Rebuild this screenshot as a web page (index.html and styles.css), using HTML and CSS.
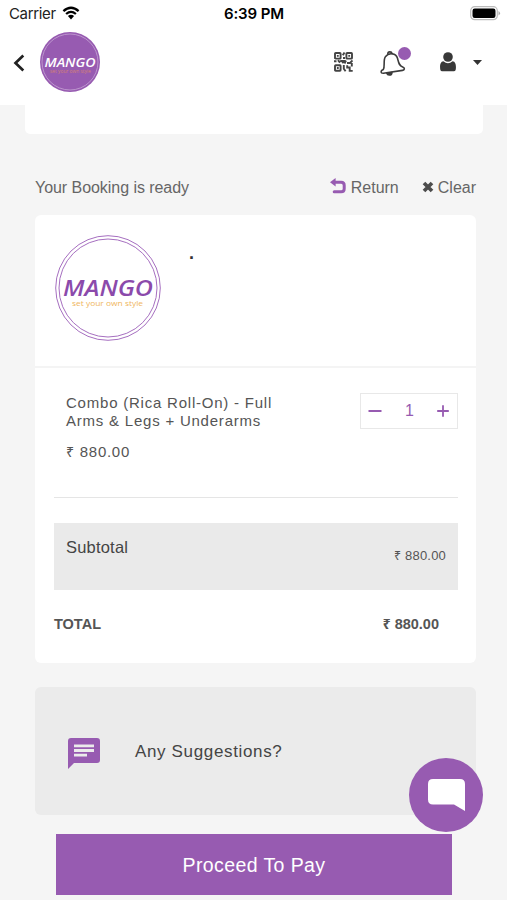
FILE: index.html
```html
<!DOCTYPE html>
<html lang="en">
<head>
<meta charset="utf-8">
<title>Mango – Booking</title>
<link rel="stylesheet" href="styles.css">
</head>
<body>
<div class="screen">
  <header class="header">
    <div class="status">
      <div class="carrier"><span>Carrier</span>
        <svg class="wifi" viewBox="0 0 18 14"><path d="M1.4 5.1Q9-1.7 16.6 5.1M4.1 8Q9 3.7 13.9 8" fill="none" stroke="#000" stroke-width="2.3"/><path d="M5.9 10.1Q9 7.6 12.1 10.1L9 13.4z"/></svg>
      </div>
      <div class="clock">6:39 PM</div>
      <svg class="battery" viewBox="0 0 31 15"><rect x=".7" y=".7" width="26.6" height="13" rx="4" fill="#fff" stroke="#bbb" stroke-width="1.2"/><rect x="2.5" y="2.5" width="23" height="9.5" rx="2.2"/><path d="M28.5 5q3 2.2 0 4.5z" fill="#aaa"/></svg>
    </div>
    <nav class="nav">
      <svg class="back" viewBox="0 0 12 18"><path d="M10.3 1.5 2.5 9l7.8 7.5" fill="none" stroke="#222" stroke-width="2.7"/></svg>
      <svg class="brand" viewBox="0 0 60 60"><circle cx="30" cy="30" r="30" fill="#975bb1"/><circle cx="30" cy="30" r="28" fill="none" stroke="#c5a3d4" stroke-width=".8"/><text class="brand-name" x="4.5" y="34.5" font-size="11.8" textLength="51" lengthAdjust="spacingAndGlyphs" fill="#fff">MANGO</text><text class="brand-tag" x="10" y="40.6" font-size="4.6" textLength="41" lengthAdjust="spacingAndGlyphs" fill="#d58273">set your own style</text></svg>
      <svg class="qr" viewBox="0 0 19 20"><g fill="none" stroke="#444" stroke-width="1.9"><rect x="1" y="1" width="5.6" height="5.6" rx=".7"/><rect x="12.4" y="1" width="5.6" height="5.6" rx=".7"/><rect x="1" y="13.2" width="5.6" height="5.6" rx=".7"/><path d="M10.5 .5 8.8 3.2M9 6h2M0 9.3h2.5M4 8.2l2 2.4M6.2 9h3.6l-1.5 2.3M12 8.5l-1.5 3M13 11h3l2.5-2.5M17.8 11v3.5M9.8 13v3.8l1.8 2.5M13.2 13.2v2.3h2.5v3.4h3"/></g><path d="M2.9 2.9h1.8v1.8H2.9zM14.3 2.9h1.8v1.8h-1.8zM2.9 15.1h1.8v1.8H2.9z" fill="#444"/></svg>
      <div class="bell-box">
        <svg class="bell" viewBox="0 0 26 26"><g fill="none" stroke="#3b3b3b" stroke-width="1.6" stroke-linejoin="round" stroke-linecap="round"><path d="M3.3 18.6C5.2 15.8 3 9.3 5.3 5.9c3.6-5 10.6-3.8 12.2 1.4 1.2 4.5 1.4 7.2 5.2 8.6 2.6 1 1.9 3.2-.2 3.5L3.4 22.2C.4 22.3.2 19.9 3.3 18.6z"/><path d="M7.8 3C7.8.3 11.4.1 12.2 2.7"/><path d="M6.8 22.2c.9 2.8 5 2.3 5.1-.6z" fill="#3b3b3b"/></g></svg>
        <i class="badge"></i>
      </div>
      <svg class="user" viewBox="0 0 16 20"><path d="M3.4 9.2C-.2 9.5-.3 15 .4 18q.3 1.3 1.8 1.3h11.6q1.5 0 1.8-1.3c.7-3 .6-8.5-3-8.8q-4.6 4-9.2 0z" fill="#383838"/><circle cx="8" cy="5" r="4.8" fill="#383838"/></svg>
      <svg class="caret" viewBox="0 0 9 5"><path d="M0 0h9L4.5 5z" fill="#333"/></svg>
    </nav>
  </header>
  <div class="panel-end"></div>
  <main class="main">
    <div class="title-row">
      <span class="title">Your Booking is ready</span>
      <a class="action return"><svg viewBox="0 0 16 16"><path d="M4 4.3h7.2q3 0 3 3v3.4q0 3-3 3H4.2" fill="none" stroke="#975bb1" stroke-width="3" stroke-linecap="round"/><path d="M0 4.3 5.6 0v8.6z" fill="#975bb1"/></svg><span>Return</span></a>
      <a class="action clear"><svg viewBox="0 0 12 12"><path d="m2 2 8 8m0-8-8 8" stroke="#4c4c4c" stroke-width="3.7"/></svg><span>Clear</span></a>
    </div>
    <section class="card">
      <div class="vendor">
        <svg class="logo" viewBox="0 0 106 106"><g fill="none" stroke="#a66fc0" stroke-width="1"><circle cx="53" cy="53" r="52.3"/><circle cx="53" cy="53" r="49"/></g><text class="brand-name" x="8" y="60.5" font-size="21" textLength="90" lengthAdjust="spacingAndGlyphs" fill="#8b4aab">MANGO</text><text class="brand-tag" x="17" y="70.8" font-size="8" textLength="71" lengthAdjust="spacingAndGlyphs" fill="#efb660">set your own style</text></svg>
        <b class="dot">.</b>
      </div>
      <div class="details">
        <div class="item">
          <div class="item-text"><div class="name">Combo (Rica Roll-On) - Full<br>Arms &amp; Legs + Underarms</div><div class="price"><span class="rs">₹</span> 880.00</div></div>
          <div class="qty"><svg viewBox="0 0 14 14"><path d="M.5 7h13" stroke="#975bb1" stroke-width="2"/></svg><span>1</span><svg class="plus" viewBox="0 0 14 14"><path d="M1.2 7h11.6M7 1.2v11.6" stroke="#975bb1" stroke-width="1.8"/></svg></div>
        </div>
        <div class="subtotal"><span>Subtotal</span><span class="amount"><span class="rs">₹</span> 880.00</span></div>
        <div class="total"><span>TOTAL</span><span class="sum"><span class="rs">₹</span> 880.00</span></div>
      </div>
    </section>
    <section class="suggest"><svg viewBox="0 0 32 31"><path d="M3 0h26q3 0 3 3v19q0 3-3 3H6l-6 6V3q0-3 3-3z" fill="#975bb1"/><path d="M6 7.8h20M6 12.5h20M6 17.2h13" stroke="#ebebeb" stroke-width="2.8"/></svg><span>Any Suggestions?</span></section>
    <div class="pay">Proceed To Pay</div>
  </main>
  <div class="chat"><svg viewBox="0 0 37 32"><path d="M5 0h27q5 0 5 5v27l-11-6.5H5q-5 0-5-5V5q0-5 5-5z" fill="#fff"/></svg></div>
</div>
</body>
</html>
```

FILE: styles.css
```css
* { box-sizing: border-box; }
body { margin: 0; font-family: "Liberation Sans", Arial, sans-serif; color: #555; }
svg { display: block; flex: none; }
.screen { position: relative; width: 507px; height: 900px; background: #f5f5f5; overflow: hidden; }
.header { height: 105px; background: #fff; }
.status { display: grid; grid-template-columns: 1fr auto 1fr; align-items: center; height: 28px; padding: 0 6px 0 9px; color: #222; }
.carrier { display: flex; align-items: center; gap: 6px; font: 15px/20px Inter, sans-serif; letter-spacing: -.35px; }
.wifi { width: 18px; height: 14px; margin-top: -2px; }
.clock { font: 600 15px/20px Inter, sans-serif; letter-spacing: -.1px; color: #000; margin-right: 2px; }
.battery { width: 31px; height: 15px; margin-top: -1px; justify-self: end; }
.nav { display: flex; align-items: center; height: 69px; padding: 0 25px 0 13px; }
.back { width: 12px; height: 18px; margin-right: 15px; }
.brand { width: 60px; height: 60px; margin-top: -1px; }
.brand-name { font-family: "Open Sans", sans-serif; font-weight: 600; font-style: italic; }
.brand-tag { font-family: "Open Sans", sans-serif; }
.qr { width: 19px; height: 20px; margin-left: auto; margin-top: -1px; }
.bell-box { position: relative; width: 26px; height: 26px; margin: 3px 0 0 27px; }
.bell { width: 26px; height: 26px; }
.badge { position: absolute; left: 18px; top: -4px; width: 13px; height: 13px; border-radius: 50%; background: #975bb1; }
.user { width: 16px; height: 20px; margin-left: 34px; margin-top: -2px; }
.caret { width: 9px; height: 5px; margin-left: 17px; margin-top: -1px; }
.panel-end { width: 458px; height: 29px; margin-left: 25px; background: #fff; border-radius: 0 0 5px 5px; }
.main { padding: 41px 31px 0 35px; }
.title-row { display: flex; align-items: center; height: 26px; margin-bottom: 14px; font-size: 16px; color: #666; }
.title { letter-spacing: -.05px; }
.action { display: flex; align-items: center; gap: 5px; }
.return { margin-left: auto; }
.return svg { width: 16px; height: 16px; margin-top: -5px; }
.clear { margin-left: 23px; gap: 4px; }
.clear svg { width: 12px; height: 12px; margin-top: -2px; }
.card { height: 448px; background: #fff; border-radius: 6px; }
.vendor { display: flex; height: 153px; padding: 20px 20px; border-bottom: 2px solid #f4f4f4; }
.logo { width: 106px; height: 106px; }
.dot { margin: 8px 0 0 28px; font-size: 18px; line-height: 20px; color: #333; }
.details { padding: 0 18px 0 19px; }
.item { display: flex; justify-content: space-between; height: 130px; padding: 25px 0 0 12px; border-bottom: 1px solid #e5e5e5; }
.name { padding-top: 1px; font-size: 15px; line-height: 18px; letter-spacing: .78px; }
.price { margin-top: 13px; font-size: 15px; line-height: 18px; letter-spacing: .72px; }
.rs { font-family: "Noto Sans", sans-serif; font-size: .95em; }
.qty { display: flex; align-items: center; width: 98px; height: 36px; padding: 0 7px; border: 1px solid #e8e8e8; color: #975bb1; font-size: 16px; }
.qty svg { width: 14px; height: 14px; margin-top: -1px; }
.qty span { margin: 0 auto 0 23px; }
.subtotal { display: flex; justify-content: space-between; height: 67px; margin-top: 25px; padding: 14px 12px; background: #eaeaea; font-size: 16.5px; line-height: 20px; color: #444; letter-spacing: .2px; }
.amount { margin-top: 9px; font-size: 13px; letter-spacing: .2px; color: #555; }
.total { display: flex; justify-content: space-between; margin-top: 24px; padding-right: 19px; font-size: 14.5px; line-height: 20px; font-weight: 700; }
.suggest { display: flex; align-items: center; gap: 35px; height: 128px; margin-top: 24px; padding: 2px 33px 0; background: #ebebeb; border-radius: 6px; font-size: 17px; letter-spacing: .65px; color: #444; }
.suggest svg { width: 32px; height: 31px; margin-top: 3px; }
.pay { display: flex; align-items: center; justify-content: center; height: 61px; margin: 19px 24px 0 21px; padding-top: 2px; background: #975bb1; color: #fff; font-size: 19.5px; letter-spacing: .4px; }
.chat { position: absolute; left: 409px; top: 758px; display: flex; align-items: center; justify-content: center; width: 74px; height: 74px; border-radius: 50%; background: #975bb1; }
.chat svg { width: 37px; height: 32px; }
```
